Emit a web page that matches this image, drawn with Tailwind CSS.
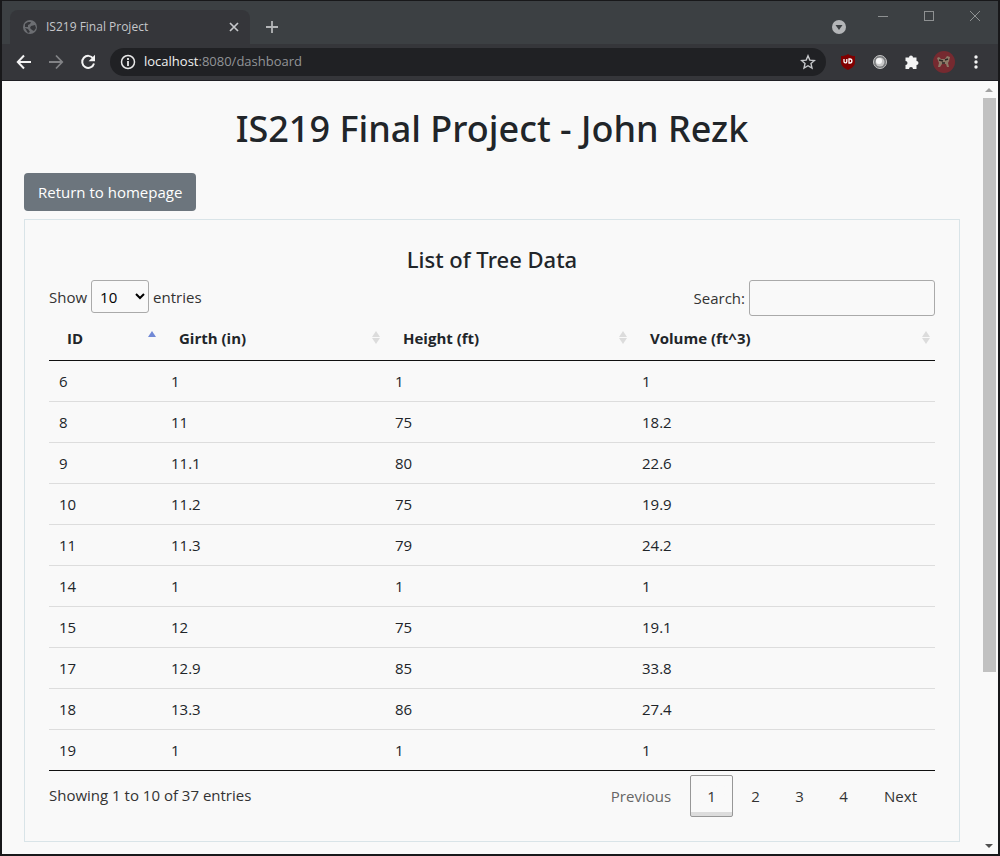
<!DOCTYPE html>
<html lang="en">
<head>
<meta charset="utf-8">
<title>IS219 Final Project</title>
<script src="https://cdn.jsdelivr.net/npm/@tailwindcss/browser@4"></script>
</head>
<body class="bg-[#18181a] font-['Open_Sans','Noto_Sans',sans-serif] text-[#212529]">
<div class="flex h-screen flex-col overflow-hidden border-x-2 border-t border-b-2 border-[#18181a]">
  <header class="shrink-0">
    <div class="flex h-[43px] bg-[#3c4043]">
      <div class="mt-[9px] ml-2 flex w-60 items-center rounded-t-lg bg-[#35363a] pr-2 pl-3 text-xs text-[#c6c8cb]">
        <svg class="size-4" viewBox="0 0 16 16"><circle cx="8" cy="8" r="7" fill="#6c6e72"/><path d="M3 5l3-2h3l-1 2-2 1v2H3zM9 7l4-1 1 3-2 3-2-1-2-2zM3 9l3 1 2 3-2 1z" fill="#35363a"/></svg>
        <span class="ml-2 grow">IS219 Final Project</span>
        <button class="flex size-4 items-center justify-center" aria-label="Close tab"><svg class="size-4" viewBox="0 0 16 16"><path d="M4 4l8 8M12 4l-8 8" stroke="#c6c8cb" stroke-width="1.7"/></svg></button>
      </div>
      <button class="ml-[14px] mt-[9px] flex h-[34px] w-4 items-center" aria-label="New tab"><svg class="size-4" viewBox="0 0 16 16"><path d="M8 2v12M2 8h12" stroke="#b4b6b8" stroke-width="1.8"/></svg></button>
      <div class="grow"></div>
      <button class="mt-[9px] flex h-[34px] items-center" aria-label="Search tabs"><svg class="size-4" viewBox="0 0 16 16"><circle cx="8" cy="8" r="7" fill="#b4b6b8"/><path d="M4.500 6h7L8 11z" fill="#3c4043"/></svg></button>
      <div class="ml-7 flex h-[30px] items-center gap-[30px] pr-[15px]">
        <button aria-label="Minimize"><svg class="size-4" viewBox="0 0 16 16"><path d="M3 8.500h10" stroke="#8e9192"/></svg></button>
        <button aria-label="Maximize"><svg class="size-4" viewBox="0 0 16 16"><rect x="3.500" y="3.500" width="9" height="9" fill="none" stroke="#8e9192"/></svg></button>
        <button aria-label="Close"><svg class="size-4" viewBox="0 0 16 16"><path d="M3 3l10 10M13 3L3 13" stroke="#8e9192"/></svg></button>
      </div>
    </div>
    <div class="flex h-[37px] items-center border-b border-[#1f1f24] bg-[#35363a] pr-[14px] pl-3">
      <button aria-label="Back"><svg class="size-5" viewBox="0 0 20 20"><path d="M17 10H4M10 3.500L3.800 10l6.200 6.500" fill="none" stroke="#f4f4f4" stroke-width="2"/></svg></button>
      <button class="ml-3" aria-label="Forward"><svg class="size-5" viewBox="0 0 20 20"><path d="M3 10h13M10 3.500l6.200 6.500-6.200 6.500" fill="none" stroke="#828386" stroke-width="1.800"/></svg></button>
      <button class="ml-3" aria-label="Reload"><svg class="size-5" viewBox="0 0 20 20"><path d="M15.200 6.500A6 6 0 1 0 16 11.500" fill="none" stroke="#f4f4f4" stroke-width="2"/><path d="M17 2.800v6.400h-6.400z" fill="#f4f4f4"/></svg></button>
      <div class="ml-3 flex h-7 grow items-center rounded-full bg-[#202124] pr-[10px] pl-2">
        <svg class="size-5" viewBox="0 0 20 20"><circle cx="10" cy="10" r="6.500" fill="none" stroke="#e8e8e8" stroke-width="1.500"/><path d="M10 9v5M10 6v2" stroke="#e8e8e8" stroke-width="1.800"/></svg>
        <div class="ml-[6px] grow text-[13px] text-[#929497]"><span class="text-[#f1f1f1]">localhost</span>:8080/dashboard</div>
        <button aria-label="Bookmark"><svg class="size-4" viewBox="0 0 16 16"><path d="M8 1.800l1.800 4.300 4.700.4-3.500 3.100 1 4.500L8 11.700l-4 2.400 1-4.500L1.500 6.500l4.700-.4z" fill="none" stroke="#c6c8cb" stroke-width="1.400"/></svg></button>
      </div>
      <button class="ml-[14px]" aria-label="Ad blocker"><svg class="size-4" viewBox="0 0 16 16"><path d="M8 0c2 1.500 4 2 7 2v6c0 4-3 6-7 8-4-2-7-4-7-8V2c3 0 5-.5 7-2z" fill="#800000"/><path d="M4 5v2.500a1.400 1.400 0 0 0 2.800 0V5M9 5v4h1a1.900 2 0 0 0 0-4z" fill="none" stroke="#fff" stroke-width="1.300"/></svg></button>
      <button class="ml-4" aria-label="Extension"><svg class="size-4" viewBox="0 0 16 16"><circle cx="8" cy="8" r="6.500" fill="#77797b" stroke="#c4c4c4"/><circle cx="8" cy="8" r="4.500" fill="#c9c9c9"/><circle cx="7" cy="7" r="3" fill="#f6f6f6"/></svg></button>
      <button class="ml-4" aria-label="Extensions"><svg class="size-4" viewBox="0 0 16 16"><path d="M1.500 3.500H5a2 2 0 1 1 4 0h3.500V7a2 2 0 1 1 0 4v4H9a2 2 0 0 0-4 0H1.500v-4a2 2 0 0 0 0-4z" fill="#f4f4f4"/></svg></button>
      <button class="ml-[13px]" aria-label="Profile"><svg class="size-[22px]" viewBox="0 0 22 22"><circle cx="11" cy="11" r="11" fill="#762a30"/><path d="M4 7l2-1 2 2h4l2-3 3 1-1 4-1 2 1 4h-2l-1-3H9l-2 3H5l1-4z" fill="#8d7a68"/><path d="M6 9l4 1M12 9l3-1M9 12h3" stroke="#2b2523" stroke-width="1.500"/></svg></button>
      <button class="ml-[13px]" aria-label="Menu"><svg class="size-4" viewBox="0 0 16 16"><g fill="#f4f4f4"><circle cx="8" cy="3" r="1.700"/><circle cx="8" cy="8" r="1.700"/><circle cx="8" cy="13" r="1.700"/></g></svg></button>
    </div>
  </header>
  <div class="flex min-h-0 grow bg-[#f9f9f9]">
    <main class="min-w-0 grow pt-6 pr-[21px] pl-[22px]">
      <h1 class="text-center font-['Noto_Sans','Open_Sans',sans-serif] text-4xl leading-[48px] font-medium">IS219 Final Project - John Rezk</h1>
      <a href="#" class="mt-5 inline-flex h-[38px] items-center rounded-sm bg-[#6c757d] px-[14px] text-[15px] text-white">Return to homepage</a>
      <section class="mt-2 border border-[#d9e4e8] p-6 text-[15px] leading-6 text-[#333]">
        <h2 class="text-center font-['Noto_Sans','Open_Sans',sans-serif] text-[22px] leading-[30px] font-medium text-[#212529]">List of Tree Data</h2>
        <div class="mt-[6px] flex items-start justify-between">
          <label class="flex items-center gap-1">Show
            <select class="h-[33px] w-[58px] rounded-[3px] border border-[#aaa] bg-transparent px-1 text-black"><option>10</option><option>25</option></select>
            entries</label>
          <label class="flex items-center gap-1">Search:
            <input type="search" class="h-9 w-[186px] rounded-[3px] border border-[#aaa] px-1"></label>
        </div>
        <table class="w-full table-fixed border-collapse text-left text-[#212529]">
          <colgroup><col class="w-[112px]"><col class="w-[224px]"><col class="w-[247px]"><col></colgroup>
          <thead><tr id="head" class="h-11 border-b border-[#111]"></tr></thead>
          <tbody id="rows" class="border-b border-[#111]"></tbody>
        </table>
        <div class="mt-1 flex justify-between">
          <div class="pt-2">Showing 1 to 10 of 37 entries</div>
          <nav class="flex h-[42px] items-center gap-px leading-6">
            <button class="h-full px-[18px] text-[#666]">Previous</button>
            <button class="h-full w-[43px] rounded-xs border border-[#979797] bg-linear-to-b from-[#f9f9f9] from-90% to-[#dcdcdc] to-90%">1</button>
            <button class="h-full w-[43px]">2</button>
            <button class="h-full w-[43px]">3</button>
            <button class="h-full w-[43px]">4</button>
            <button class="h-full px-[18px]">Next</button>
          </nav>
        </div>
      </section>
    </main>
    <div class="flex w-[17px] shrink-0 flex-col items-center pr-px">
      <div class="flex h-[17px] items-center"><svg class="h-1 w-2" viewBox="0 0 8 4"><path d="M0 4h8L4 0z" fill="#a3a3a3"/></svg></div>
      <div class="h-[574px] w-[13px] bg-[#c1c1c1]"></div>
      <div class="grow"></div>
      <div class="flex h-[17px] items-center"><svg class="h-1 w-2" viewBox="0 0 8 4"><path d="M0 0h8L4 4z" fill="#505050"/></svg></div>
    </div>
  </div>
</div>
<script>
const up = c => `<path d="M4 0L8 6H0z" fill="${c}"/>`;
document.getElementById('head').innerHTML = ['ID', 'Girth (in)', 'Height (ft)', 'Volume (ft^3)'].map((t, i) =>
  `<th class="pl-[18px] pr-[5px] font-bold"><div class="flex items-center justify-between">${t}<svg class="h-[14px] w-2" viewBox="0 0 8 14">${i ? up('#dcdcdc') + '<path d="M0 7h8L4 13z" fill="#dcdcdc"/>' : up('#7189d6')}</svg></div></th>`).join('');
const data = [[6,1,1,1],[8,11,75,18.2],[9,11.1,80,22.6],[10,11.2,75,19.9],[11,11.3,79,24.2],[14,1,1,1],[15,12,75,19.1],[17,12.9,85,33.8],[18,13.3,86,27.4],[19,1,1,1]];
document.getElementById('rows').innerHTML = data.map(r =>
  `<tr class="h-[41px] not-first:border-t border-[#ddd]">${r.map(c => `<td class="px-[10px]">${c}</td>`).join('')}</tr>`).join('');
</script>
</body>
</html>
